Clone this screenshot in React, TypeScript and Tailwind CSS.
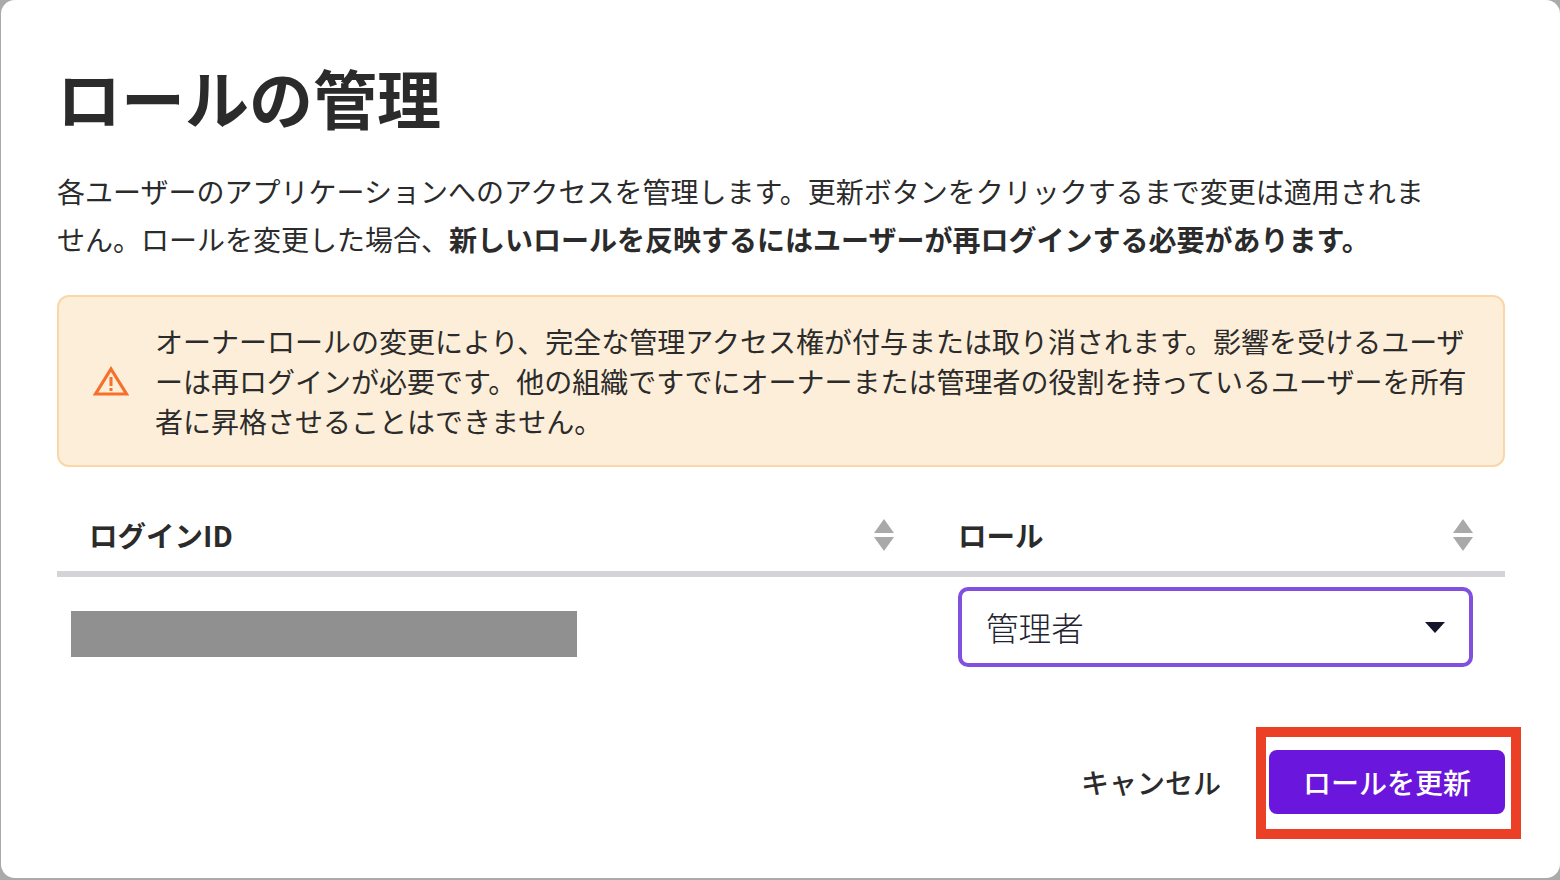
const jp = '"Noto Sans CJK JP", "Noto Sans", sans-serif';

function SortArrows() {
  return (
    <svg width="22" height="34" viewBox="0 0 22 34" className="shrink-0">
      <path d="M11 1 L21 15 H1 Z" fill="#a9a9a9" />
      <path d="M1 19 H21 L11 33 Z" fill="#a9a9a9" />
    </svg>
  );
}

function WarningIcon() {
  return (
    <svg width="36" height="30" viewBox="0 1 36 30" className="shrink-0">
      <path d="M18 4 L33.5 29 H2.5 Z" fill="none" stroke="#f6702c" strokeWidth="3.2" />
      <rect x="16.5" y="12" width="3" height="9" fill="#f6702c" />
      <rect x="16.5" y="23" width="3" height="3" fill="#f6702c" />
    </svg>
  );
}

export default function App() {
  return (
    <div className="w-[1560px] h-[880px] bg-[#aaaaaa] overflow-hidden pl-px pb-0.5" style={{ fontFamily: jp }}>
      <div className="h-full bg-white rounded-[14px] pl-14 pr-[55px] pt-[53px] text-[#2b2b2b]">
        <h1 className="text-[64px] leading-[86px] font-bold">ロールの管理</h1>
        <p className="mt-7 max-w-[1385px] text-[28px] leading-[48px]">
          各ユーザーのアプリケーションへのアクセスを管理します。更新ボタンをクリックするまで変更は適用されません。ロールを変更した場合、
          <span className="font-bold">新しいロールを反映するにはユーザーが再ログインする必要があります。</span>
        </p>

        <div className="mt-8 h-[172px] bg-[#fdeed9] border-2 border-[#f9d7a8] rounded-xl flex items-center pl-[34px] pr-[34px] gap-[26px]">
          <WarningIcon />
          <p className="text-[28px] leading-10">
            オーナーロールの変更により、完全な管理アクセス権が付与または取り消されます。影響を受けるユーザーは再ログインが必要です。他の組織ですでにオーナーまたは管理者の役割を持っているユーザーを所有者に昇格させることはできません。
          </p>
        </div>

        <div className="mt-[36px] flex h-[74px] items-center border-b-[6px] border-[#d4d4d8] pb-1 font-bold text-[28.5px]">
          <div className="w-[901px] pl-[32px] pr-[63px] flex items-center justify-between">
            <span>ログインID</span>
            <SortArrows />
          </div>
          <div className="flex-1 pr-[31px] flex items-center justify-between">
            <span>ロール</span>
            <SortArrows />
          </div>
        </div>

        <div className="flex items-start pt-[10px]">
          <div className="w-[901px] pl-[14px] pt-6">
            <div className="w-[506px] h-[46px] bg-[#909090]" />
          </div>
          <div className="w-[515px] h-[80px] border-4 border-[#8250df] rounded-[10px] flex items-center justify-between pl-6 pr-6">
            <span className="text-[32.6px] font-light text-[#1f2430]">管理者</span>
            <svg width="20" height="11" viewBox="0 0 20 11">
              <path d="M0 0 H20 L10 11 Z" fill="#14142b" />
            </svg>
          </div>
        </div>

        <div className="mt-[83px] flex items-center justify-end gap-12">
          <button className="text-[28px] font-medium text-[#2b2b2b] leading-none">キャンセル</button>
          <div className="relative">
            <button className="block w-[236px] h-[64px] bg-[#6a16dc] rounded-lg text-white text-[28px] font-medium">ロールを更新</button>
            <div className="absolute left-[-13px] top-[-23px] w-[265px] h-[112px] border-[10px] border-[#ec4026]" />
          </div>
        </div>
      </div>
    </div>
  );
}
